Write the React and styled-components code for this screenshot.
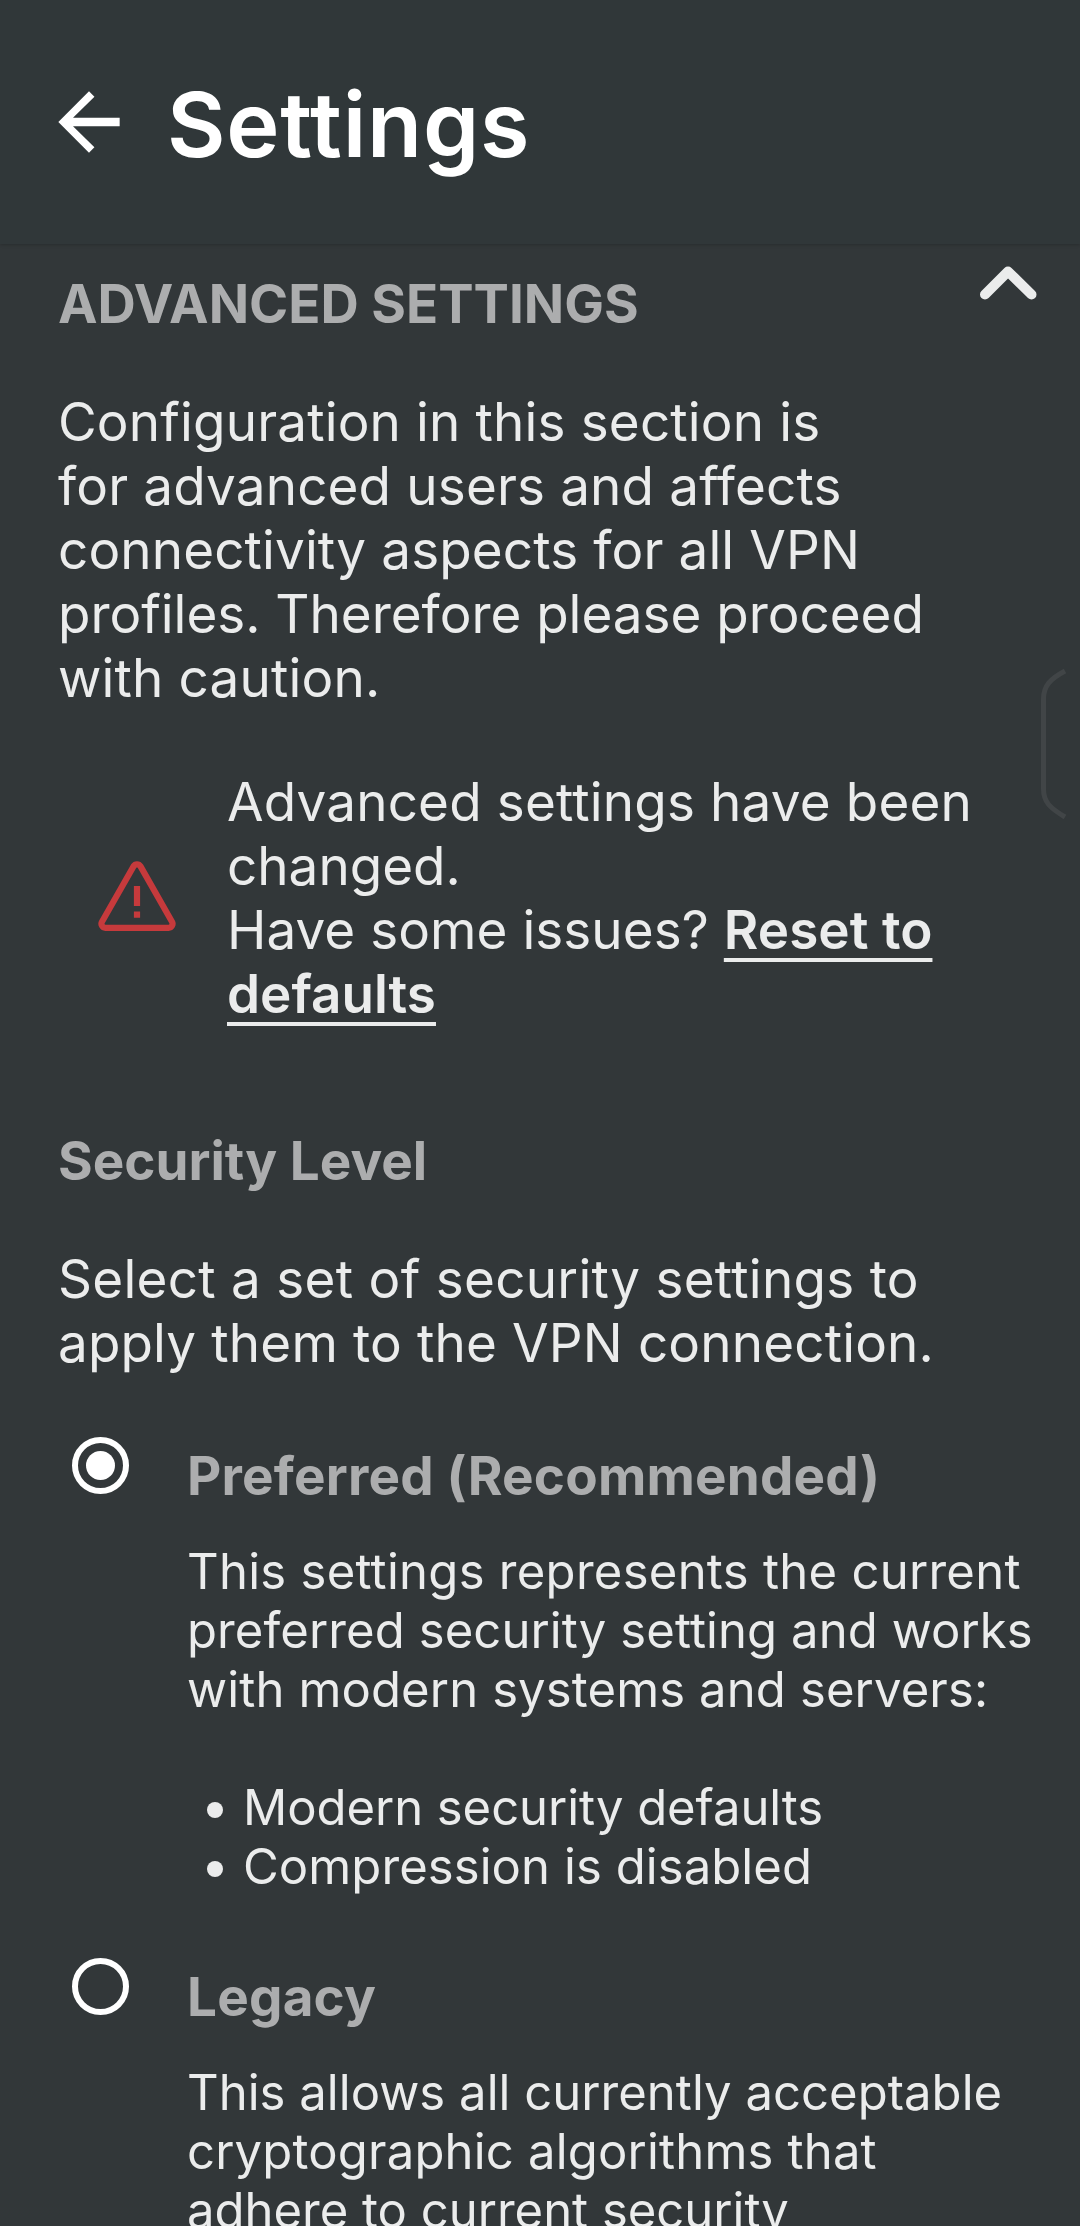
import React from "react";
import styled, { createGlobalStyle } from "styled-components";

const GlobalStyle = createGlobalStyle`
  * {
    box-sizing: border-box;
  }
  body {
    margin: 0;
    background: #323739;
    font-family: Inter, "Liberation Sans", sans-serif;
  }
`;

// every line is a pair: text, letter spacing in px
const intro = [
  ["Configuration in this section is", 0.15],
  ["for advanced users and affects", 0.15],
  ["connectivity aspects for all VPN", 0.12],
  ["profiles. Therefore please proceed", -0.03],
  ["with caution.", 0.16],
];

const securityIntro = [
  ["Select a set of security settings to", 0.28],
  ["apply them to the VPN connection.", 0.15],
];

const options = [
  {
    title: "Preferred (Recommended)",
    checked: true,
    lines: [
      ["This settings represents the current", 0.28],
      ["preferred security setting and works", 0.1],
      ["with modern systems and servers:", 0.13],
    ],
    items: [
      ["Modern security defaults", -0.05],
      ["Compression is disabled", 0.08],
    ],
  },
  {
    title: "Legacy",
    checked: false,
    lines: [
      ["This allows all currently acceptable", 0.04],
      ["cryptographic algorithms that", 0.19],
      ["adhere to current security", 0],
    ],
    items: [],
  },
];

function Lines({ lines }) {
  return lines.map(([text, spacing]) => (
    <Line key={text} $spacing={spacing}>
      {text}
    </Line>
  ));
}

function Option({ title, checked, lines, items }) {
  return (
    <OptionRow>
      <Radio>{checked && <RadioDot />}</Radio>
      <OptionBody>
        <OptionTitle>{title}</OptionTitle>
        <Description>
          <Lines lines={lines} />
        </Description>
        {items.length > 0 && (
          <List>
            {items.map(([text, spacing]) => (
              <Item key={text} $spacing={spacing}>
                {text}
              </Item>
            ))}
          </List>
        )}
      </OptionBody>
    </OptionRow>
  );
}

export default function App() {
  return (
    <Screen>
      <GlobalStyle />
      <Header>
        <BackIcon viewBox="0 0 24 24">
          <path d="M20 10.9H7.83l5.59-5.49L12 4l-8 8 8 8 1.41-1.41L7.83 13.1H20z" />
        </BackIcon>
        <Title>Settings</Title>
      </Header>

      <Content>
        <SectionTop>
          <Heading $caps>Advanced settings</Heading>
          <Chevron viewBox="0 0 60 38">
            <path d="M7 30.5 30 7.5l23.5 23" />
          </Chevron>
        </SectionTop>
        <Text>
          <Lines lines={intro} />
        </Text>

        <Notice>
          <WarningIcon viewBox="0 0 78 70">
            <path d="M35.6 5.2 4 60.8a4 4 0 0 0 3.4 6h63.2a4 4 0 0 0 3.4-6L42.4 5.2a4 4 0 0 0-6.8 0z" />
            <path d="M39 25v20M39 50.5v6.3" />
          </WarningIcon>
          <NoticeText>
            <Line $spacing={0.16}>Advanced settings have been</Line>
            <Line>changed.</Line>
            <Line $spacing={0.05}>
              Have some issues? <Reset>Reset to</Reset>
            </Line>
            <Line>
              <Reset>defaults</Reset>
            </Line>
          </NoticeText>
        </Notice>

        <Heading>Security Level</Heading>
        <Text>
          <Lines lines={securityIntro} />
        </Text>

        {options.map((option) => (
          <Option key={option.title} {...option} />
        ))}
      </Content>

      <EdgeHandle viewBox="0 0 30 154">
        <path d="M26 4C11 12 4.500 19 4.500 32v90c0 13 6.500 19 21.500 28" />
      </EdgeHandle>
    </Screen>
  );
}

const Screen = styled.div`
  position: relative;
  width: 1080px;
  height: 2226px;
  overflow: hidden;
  background: #323739;
`;

const Header = styled.header`
  display: flex;
  align-items: flex-start;
  height: 244px;
  padding: 70px 0 0 43px;
  background: #303739;
  box-shadow: 0 0 4px rgba(0, 0, 0, 0.3);
`;

const BackIcon = styled.svg`
  width: 92px;
  height: 92px;
  margin-top: 6px;
  fill: #fff;
`;

const Title = styled.h1`
  margin: 0 0 0 32px;
  color: #fff;
  font-size: 90px;
  font-weight: 600;
  line-height: 110px;
  letter-spacing: 0.8px;
`;

const Content = styled.main`
  padding: 28px 0 0 58px;
`;

const SectionTop = styled.div`
  display: flex;
  justify-content: space-between;
  align-items: flex-start;
  padding-right: 42px;
`;

const Heading = styled.h2`
  margin: 0;
  color: #acadae;
  font-size: 53px;
  font-weight: 700;
  line-height: 64px;
  white-space: nowrap;
  text-transform: ${({ $caps }) => ($caps ? "uppercase" : "none")};
`;

const OptionTitle = styled(Heading)`
  letter-spacing: 0.2px;
`;

const Chevron = styled.svg`
  width: 60px;
  height: 38px;
  margin-top: -8px;
  fill: none;
  stroke: #ebecec;
  stroke-width: 10;
  stroke-linecap: round;
  stroke-linejoin: round;
`;

const Text = styled.p`
  margin: 54px 0 0;
  color: #ebecec;
  font-size: 53px;
  line-height: 64px;
`;

const Line = styled.span`
  display: block;
  letter-spacing: ${({ $spacing = 0 }) => $spacing}px;
  white-space: nowrap;
`;

const Notice = styled.div`
  display: flex;
  align-items: center;
  gap: 51px;
  margin: 60px 0 103px;
  padding-left: 40px;
`;

const WarningIcon = styled.svg`
  width: 78px;
  height: 70px;
  margin-top: -4px;
  fill: none;
  stroke: #c63a3c;
  stroke-width: 6.200;
`;

const NoticeText = styled(Text)`
  margin: 0;
`;

const Reset = styled.a`
  font-weight: 600;
  text-decoration: underline;
  text-decoration-thickness: 4px;
  text-underline-offset: 8.500px;
  text-decoration-skip-ink: none;
  cursor: pointer;
`;

const OptionRow = styled.div`
  display: flex;
  align-items: flex-start;
  gap: 58px;
  margin-top: 69px;
  padding-left: 14px;
`;

const Radio = styled.span`
  display: flex;
  flex: none;
  align-items: center;
  justify-content: center;
  width: 57px;
  height: 57px;
  margin-top: -7px;
  border: 6px solid #fff;
  border-radius: 50%;
`;

const RadioDot = styled.span`
  width: 29px;
  height: 29px;
  border-radius: 50%;
  background: #fff;
`;

const OptionBody = styled.div`
  color: #ebecec;
  font-size: 49px;
  line-height: 59px;
`;

const Description = styled.p`
  margin: 34px 0 0;
`;

const List = styled.ul`
  margin: 59px 0 0;
  padding: 0 0 0 20px;
  list-style: none;
`;

const Item = styled.li`
  display: flex;
  align-items: center;
  gap: 20px;
  letter-spacing: ${({ $spacing }) => $spacing}px;
  white-space: nowrap;

  &::before {
    content: "";
    width: 16px;
    height: 16px;
    margin-top: 5px;
    border-radius: 50%;
    background: #ebecec;
  }
`;

// gesture handle that floats at the right edge of the screen
const EdgeHandle = styled.svg`
  position: absolute;
  top: 667px;
  right: 11px;
  width: 30px;
  height: 154px;
  fill: none;
  stroke: #414547;
  stroke-width: 5;
`;
